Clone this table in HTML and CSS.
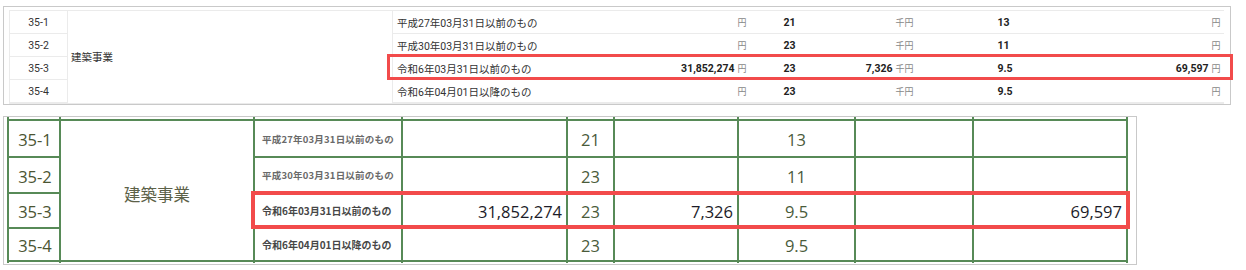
FILE: index.html
```html
<!DOCTYPE html>
<html lang="ja">
<head>
<meta charset="utf-8">
<link rel="stylesheet" href="styles.css">
</head>
<body>
<div class="page">
  <div class="panel panel-web">
    <table class="web">
      <colgroup>
        <col class="w-no"><col class="w-cat"><col class="w-desc"><col class="w-amt"><col class="w-rate"><col class="w-amt2"><col class="w-ratio"><col class="w-amt3">
      </colgroup>
      <tr>
        <td class="no">35-1</td>
        <td class="cat" rowspan="4">建築事業</td>
        <td class="desc">平成27年03月31日以前のもの</td>
        <td class="amt"><span class="unit">円</span></td>
        <td class="rate">21</td>
        <td class="amt2"><span class="unit">千円</span></td>
        <td class="ratio">13</td>
        <td class="amt3"><span class="unit">円</span></td>
      </tr>
      <tr>
        <td class="no">35-2</td>
        <td class="desc">平成30年03月31日以前のもの</td>
        <td class="amt"><span class="unit">円</span></td>
        <td class="rate">23</td>
        <td class="amt2"><span class="unit">千円</span></td>
        <td class="ratio">11</td>
        <td class="amt3"><span class="unit">円</span></td>
      </tr>
      <tr>
        <td class="no">35-3</td>
        <td class="desc">令和6年03月31日以前のもの</td>
        <td class="amt"><b>31,852,274</b><span class="unit">円</span></td>
        <td class="rate">23</td>
        <td class="amt2"><b>7,326</b><span class="unit">千円</span></td>
        <td class="ratio">9.5</td>
        <td class="amt3"><b>69,597</b><span class="unit">円</span></td>
      </tr>
      <tr>
        <td class="no">35-4</td>
        <td class="desc">令和6年04月01日以降のもの</td>
        <td class="amt"><span class="unit">円</span></td>
        <td class="rate">23</td>
        <td class="amt2"><span class="unit">千円</span></td>
        <td class="ratio">9.5</td>
        <td class="amt3"><span class="unit">円</span></td>
      </tr>
    </table>
  </div>

  <div class="panel panel-sheet">
    <div class="sheet">
      <div class="stub"></div><div class="stub"></div><div class="stub"></div><div class="stub"></div><div class="stub"></div><div class="stub"></div><div class="stub"></div><div class="stub"></div><div class="stub"></div>

      <div class="c s-no">35-1</div>
      <div class="c s-cat">建築事業</div>
      <div class="c s-desc light">平成27年03月31日以前のもの</div>
      <div class="c s-num"></div>
      <div class="c s-rate">21</div>
      <div class="c s-num"></div>
      <div class="c s-ratio">13</div>
      <div class="c"></div>
      <div class="c s-num"></div>

      <div class="c s-no">35-2</div>
      <div class="c s-desc light">平成30年03月31日以前のもの</div>
      <div class="c s-num"></div>
      <div class="c s-rate">23</div>
      <div class="c s-num"></div>
      <div class="c s-ratio">11</div>
      <div class="c"></div>
      <div class="c s-num"></div>

      <div class="c s-no">35-3</div>
      <div class="c s-desc">令和6年03月31日以前のもの</div>
      <div class="c s-num">31,852,274</div>
      <div class="c s-rate">23</div>
      <div class="c s-num">7,326</div>
      <div class="c s-ratio">9.5</div>
      <div class="c"></div>
      <div class="c s-num">69,597</div>

      <div class="c s-no">35-4</div>
      <div class="c s-desc">令和6年04月01日以降のもの</div>
      <div class="c s-num"></div>
      <div class="c s-rate">23</div>
      <div class="c s-num"></div>
      <div class="c s-ratio">9.5</div>
      <div class="c"></div>
      <div class="c s-num"></div>

      <div class="stub"></div><div class="stub"></div><div class="stub"></div><div class="stub"></div><div class="stub"></div><div class="stub"></div><div class="stub"></div><div class="stub"></div><div class="stub"></div>
    </div>
  </div>

  <div class="hl hl-web"></div>
  <div class="hl hl-sheet"></div>
</div>
</body>
</html>
```

FILE: styles.css
```css
html, body {
  margin: 0;
  padding: 0;
  background: #fff;
}

.page {
  position: relative;
  width: 1246px;
  height: 270px;
  padding-top: 6px;
  box-sizing: border-box;
}

.panel {
  box-sizing: border-box;
  border: 1px solid #c9c9c9;
  margin-left: 3px;
}

/* ---------- top: web form ---------- */
.panel-web {
  width: 1228px;
  height: 99px;
  padding: 3px 0 0 5px;
}

.web {
  border-collapse: collapse;
  table-layout: fixed;
  width: 1214px;
  font-family: Roboto, "Noto Sans CJK JP", sans-serif;
  font-size: 10.5px;
  color: #333;
}

.w-no { width: 58px; }
.w-cat { width: 325px; }
.w-desc { width: 168px; }
.w-amt { width: 190px; }
.w-rate { width: 65px; }
.w-amt2 { width: 105px; }
.w-ratio { width: 180px; }
.w-amt3 { width: 123px; }

.web td {
  height: 22px;
  padding: 0;
  border-top: 1px solid #ebebeb;
  border-bottom: 1px solid #ebebeb;
  white-space: nowrap;
  vertical-align: middle;
}

.web tr:last-child td {
  border-bottom: 2px solid #ebebeb;
}

.web .no {
  text-align: center;
  border-left: 1px solid #ebebeb;
  border-right: 1px solid #ebebeb;
}

.web .cat {
  padding-left: 3px;
  border-right: 1px solid #ebebeb;
}

.web .desc {
  padding-left: 4px;
}

.web b {
  font-weight: 700;
  color: #222;
  margin-right: 3px;
}

.web .amt { text-align: right; padding-right: 4px; }
.web .amt2 { text-align: right; padding-right: 7px; }
.web .amt3 { text-align: right; padding-right: 3px; }

.web .rate {
  padding-left: 33px;
  font-weight: 700;
  color: #222;
}

.web .ratio {
  padding-left: 77px;
  font-weight: 700;
  color: #222;
}

.unit {
  font-size: 9px;
  color: #888;
  font-family: "Noto Sans CJK JP", sans-serif;
}

/* ---------- bottom: spreadsheet image ---------- */
.panel-sheet {
  width: 1134px;
  margin-top: 11px;
  padding: 0 0 1px 3px;
}

.sheet {
  display: grid;
  width: 1121px;
  box-sizing: border-box;
  padding: 0 2px;
  gap: 2px;
  background: #578a57;
  grid-template-columns: 50px 192px 146px 163px 45px 122px 115px 116px 152px;
  grid-template-rows: 2px 35px 34px 33px 31px 1px;
}

.stub { background: #fff; }

.c {
  background: #fff;
  display: flex;
  align-items: center;
  font-family: "Open Sans", sans-serif;
  font-size: 16.5px;
  color: #4b5532;
  white-space: nowrap;
}

.s-no {
  justify-content: center;
  padding-left: 2px;
  padding-top: 2px;
}

.s-cat {
  grid-column: 2;
  grid-row: 2 / span 4;
  justify-content: center;
  padding-top: 7px;
  font-family: "Noto Sans CJK JP", sans-serif;
  font-size: 16.5px;
  color: #5c6148;
}

.s-desc {
  padding-left: 7px;
  font-family: "Noto Sans CJK JP", sans-serif;
  font-size: 10px;
  font-weight: 700;
  color: #474747;
}

.s-desc.light {
  font-size: 9.5px;
  color: #6a6a6a;
  letter-spacing: 0.2px;
}

.s-num {
  justify-content: flex-end;
  padding-right: 4px;
  padding-top: 2px;
  color: #1c1c28;
}

.s-rate,
.s-ratio {
  justify-content: center;
  padding-top: 2px;
  color: #4a5b3a;
}

/* ---------- red highlight overlays ---------- */
.hl {
  position: absolute;
  box-sizing: border-box;
  border: 3px solid #f24b4b;
}

.hl-web {
  left: 387px;
  top: 54px;
  width: 846px;
  height: 26px;
}

.hl-sheet {
  left: 251px;
  top: 191px;
  width: 879px;
  height: 38px;
  border-width: 4px;
}
```
